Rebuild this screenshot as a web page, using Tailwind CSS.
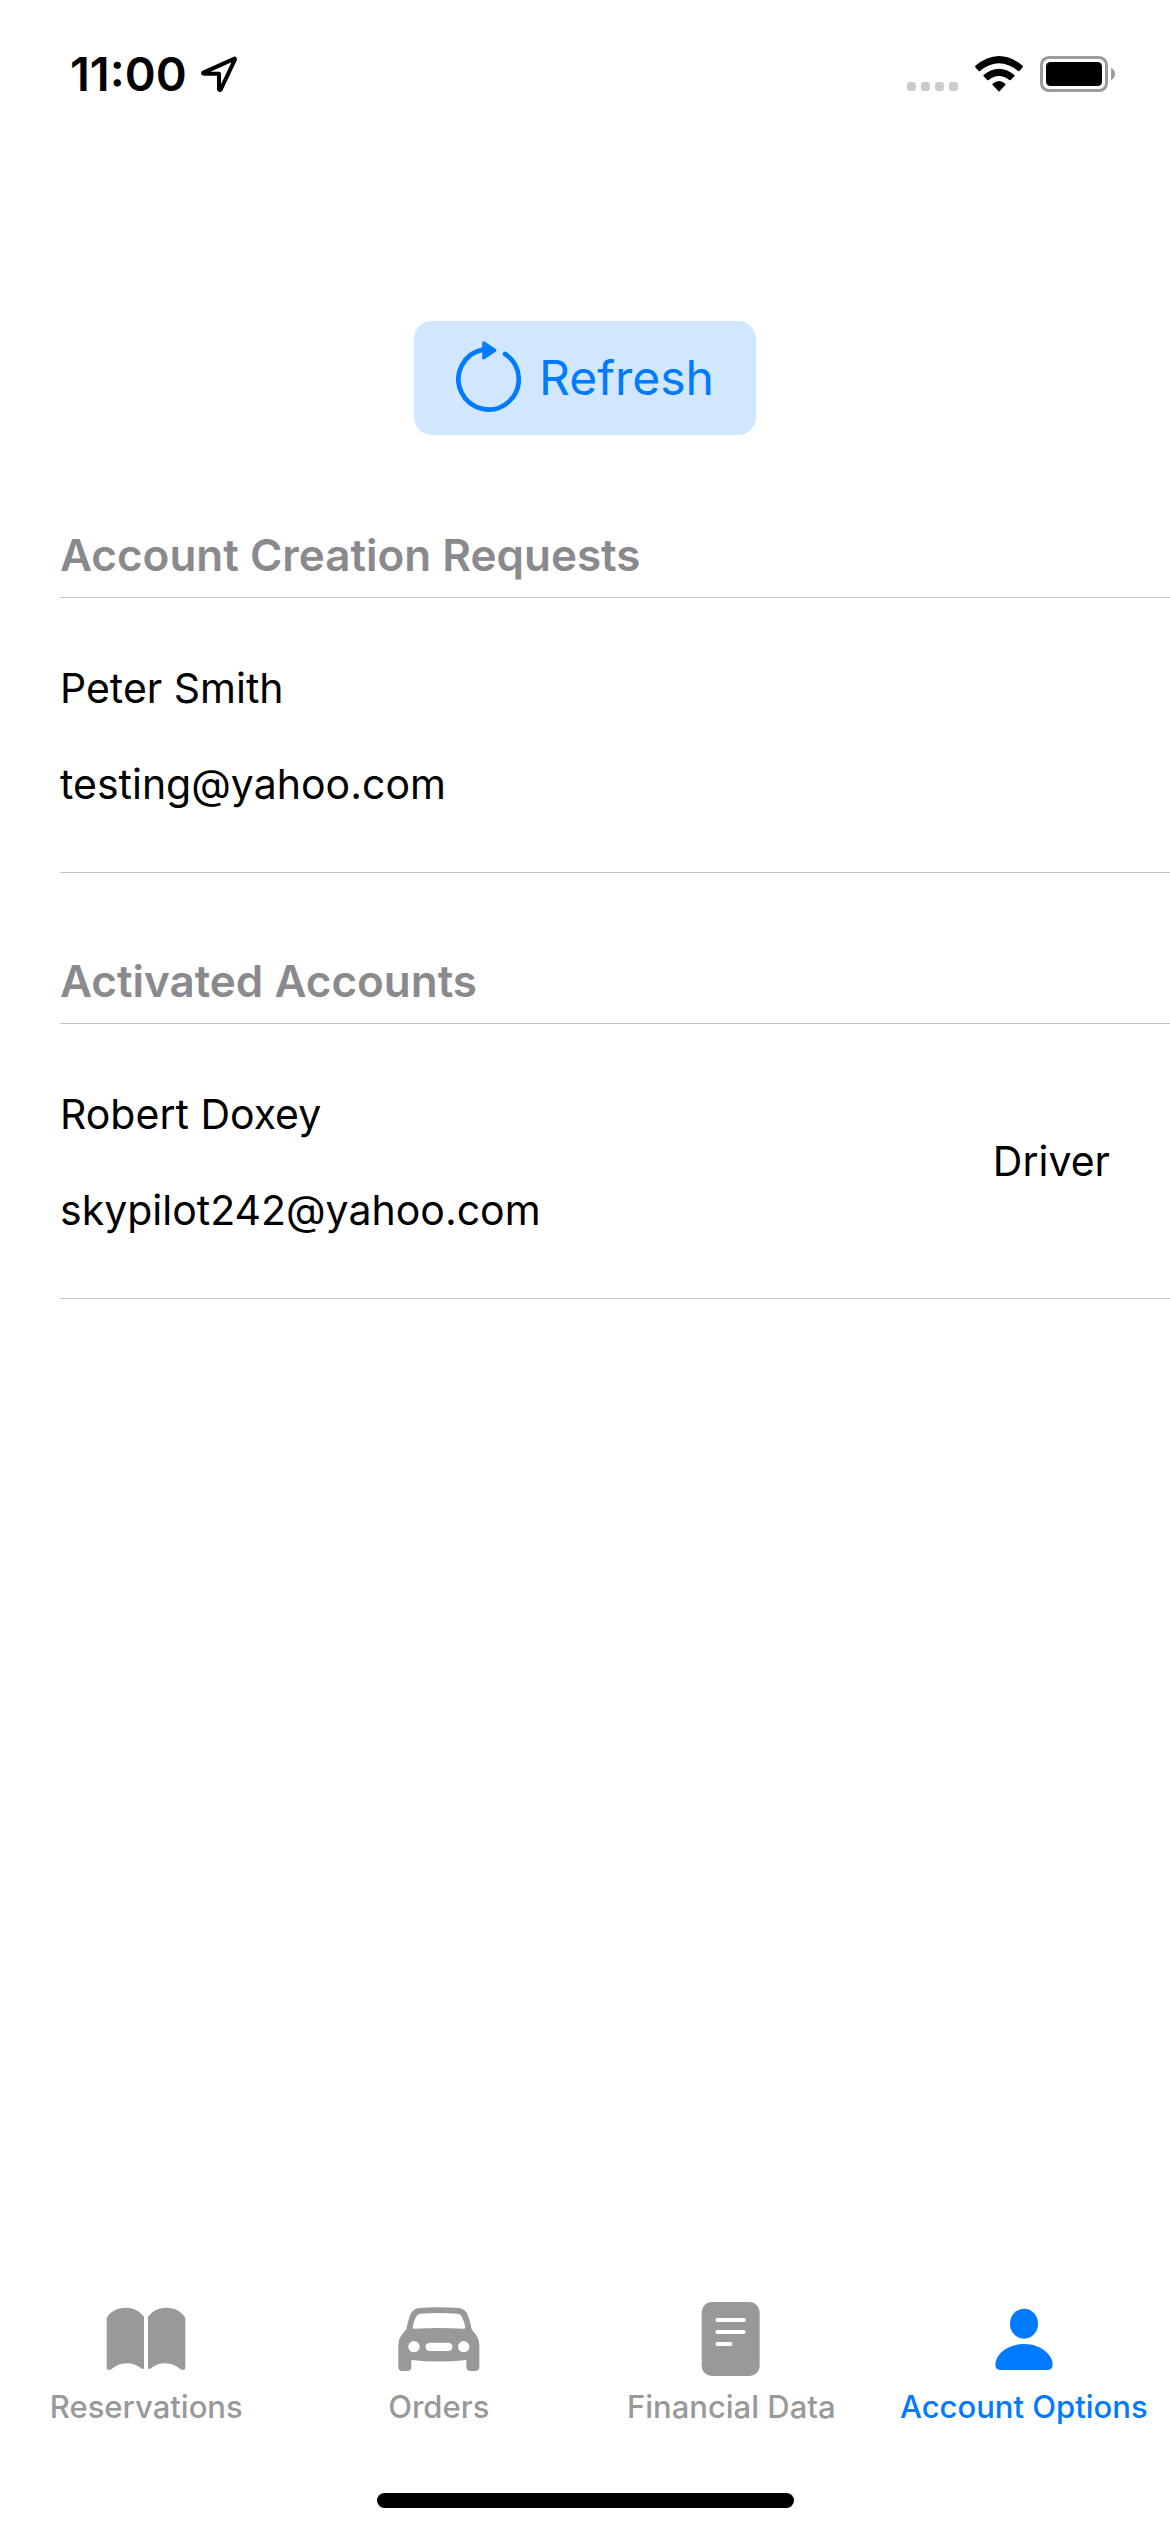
<!DOCTYPE html>
<html lang="en">
<head>
<meta charset="utf-8">
<meta name="viewport" content="width=device-width, initial-scale=1">
<title>Account Options</title>
<script src="https://cdn.jsdelivr.net/npm/@tailwindcss/browser@4"></script>
</head>
<body class="flex min-h-screen flex-col bg-white font-['Inter',sans-serif] text-black">

  <!-- Status bar -->
  <header class="flex items-center justify-between pt-[50px] pr-[55px] pl-[70px]">
    <div class="flex items-center gap-[14px]">
      <time class="text-[47px] leading-[48px] font-semibold">11:00</time>
      <svg class="h-9 w-9" viewBox="480 80 108 108" fill="none" stroke="#000" stroke-width="12" stroke-linejoin="round" aria-label="Location in use">
        <path d="M581 88 L487 130 Q485 133 489 133 H534 V179 Q535 183 539 181 L582 90 Z"/>
      </svg>
    </div>
    <div class="flex items-center">
      <svg class="mr-[17px] h-9 w-[51px]" viewBox="0 0 51 36" fill="#cbcbcb" aria-label="No signal">
        <rect x="0" y="26" width="9" height="9" rx="3"/>
        <rect x="14" y="26" width="9" height="9" rx="3"/>
        <rect x="28" y="26" width="9" height="9" rx="3"/>
        <rect x="42" y="26" width="9" height="9" rx="3"/>
      </svg>
      <svg class="mr-[17px] h-9 w-12" viewBox="285 76 144 108" aria-label="Wi-Fi">
        <path d="M285 106 Q357 46 429 106 Q430 108 428 110 L418 121 Q416 123 414 121 Q357 75 300 121 Q298 123 296 121 L286 110 Z"/>
        <path d="M311 133 Q357 95 403 133 Q405 135 403 137 L392 148 Q390 150 388 148 Q357 124 326 148 Q324 150 322 148 L311 137 Q309 135 311 133 Z"/>
        <path d="M338 159 Q357 143 376 159 Q378 161 376 163 L359 181 Q357 184 355 181 L338 163 Q336 161 338 159 Z"/>
      </svg>
      <svg class="h-9 w-[75px]" viewBox="480 78 225 108" aria-label="Battery full">
        <rect x="484.500" y="82.500" width="195" height="99" rx="22" fill="none" stroke="#9b9b9b" stroke-width="9"/>
        <rect x="498" y="96" width="168" height="72" rx="13"/>
        <path d="M693 114 Q705 119 705 132 Q705 145 693 150 Z" fill="#9b9b9b"/>
      </svg>
    </div>
  </header>

  <main class="flex grow flex-col pt-[223px]">
    <button type="button" class="flex h-[114px] items-center gap-[18px] self-center rounded-[18px] bg-[#d1e7ff] px-[42px] text-[48px] leading-[60px] text-[#007aff]">
      <svg class="h-[75px] w-[65px]" viewBox="171 120 195 225" fill="none" stroke="#007aff" aria-hidden="true">
        <path d="M318 159 A90.500 90.500 0 1 1 252 146" stroke-width="14" stroke-linecap="round"/>
        <path d="M254 125 L288 147.500 L254 171 Z" fill="#007aff" stroke-width="9" stroke-linejoin="round"/>
      </svg>
      Refresh
    </button>

    <div class="mt-3 pl-[60px]">
      <section>
        <h2 class="border-b border-[#c6c6c8] pt-[82px] pb-4 text-[44px] leading-[52px] font-semibold text-[#8a8a8e]">Account Creation Requests</h2>
        <ul>
          <li class="flex items-center justify-between border-b border-[#c6c6c8] pr-[60px]">
            <div class="flex flex-col gap-12 pt-[66px] pb-16 text-[41px] leading-[48px]">
              <p>Peter Smith</p>
              <p>testing@yahoo.com</p>
            </div>
          </li>
        </ul>
      </section>
      <section>
        <h2 class="border-b border-[#c6c6c8] pt-[82px] pb-4 text-[44px] leading-[52px] font-semibold text-[#8a8a8e]">Activated Accounts</h2>
        <ul>
          <li class="flex items-center justify-between border-b border-[#c6c6c8] pr-[60px]">
            <div class="flex flex-col gap-12 pt-[66px] pb-16 text-[41px] leading-[48px]">
              <p>Robert Doxey</p>
              <p>skypilot242@yahoo.com</p>
            </div>
            <p class="text-[41px] leading-[48px]">Driver</p>
          </li>
        </ul>
      </section>
    </div>
  </main>

  <!-- Tab bar -->
  <nav class="grid grid-cols-4 text-[31px] leading-9 font-medium whitespace-nowrap text-[#999999]" aria-label="Tabs">
    <a href="#reservations" class="flex flex-col items-center gap-[11px]">
      <svg class="h-[78px] w-[100px]" viewBox="199 60 300 234" fill="currentColor" aria-hidden="true">
        <path d="M231 114 C241 95 263 83 289 83 C313 83 333 95 343 111 V264 Q341 269 336 266 C322 255 308 250 291 250 C273 250 259 256 245 268 Q233 274 231 264 Z"/>
        <path d="M467 114 C457 95 435 83 409 83 C385 83 365 95 355 111 V264 Q357 269 362 266 C376 255 390 250 407 250 C425 250 439 256 453 268 Q465 274 467 264 Z"/>
      </svg>
      Reservations
    </a>
    <a href="#orders" class="flex flex-col items-center gap-[11px]">
      <svg class="h-[78px] w-[100px]" viewBox="116 60 300 234" fill="currentColor" aria-hidden="true">
        <path fill-rule="evenodd" d="M206 84 Q265 79 325 84 C339 86 348 93 352 104 C357 117 361 132 364 148 L378 166 Q387 179 387 196 V260 Q387 273 374 273 H361 Q348 273 348 260 V240 Q265 249 183 240 V260 Q183 273 170 273 H157 Q144 273 144 260 V196 Q144 179 153 166 L168 148 C171 132 175 117 180 104 C184 93 193 86 206 84 Z
          M210 101 Q201 102 197 110 Q190 124 187 141 Q187 147 193 146 Q265 142 339 146 Q345 147 345 141 Q341 124 335 110 Q331 102 322 101 Q265 97 210 101 Z
          M174 200 a17 17 0 1 0 34 0 a17 17 0 1 0 -34 0 Z
          M323 200 a17 17 0 1 0 34 0 a17 17 0 1 0 -34 0 Z
          M238 188 H294 a12.500 12.500 0 0 1 0 25 H238 a12.500 12.500 0 0 1 0 -25 Z"/>
      </svg>
      Orders
    </a>
    <a href="#financial" class="flex flex-col items-center gap-[11px]">
      <svg class="h-[78px] w-[100px]" viewBox="214 60 300 234" aria-hidden="true">
        <rect x="276" y="66" width="174" height="222" rx="30" fill="currentColor"/>
        <path d="M323 120 H402 M323 156 H402 M323 192 H362" stroke="#fff" stroke-width="12" stroke-linecap="round"/>
      </svg>
      Financial Data
    </a>
    <a href="#account" aria-current="page" class="flex flex-col items-center gap-[11px] text-[#007aff]">
      <svg class="h-[78px] w-[100px]" viewBox="281 60 300 234" fill="currentColor" aria-hidden="true">
        <ellipse cx="431" cy="131" rx="42" ry="45"/>
        <path d="M345 254 C345 226 378 192 431 192 C484 192 517 226 517 254 Q517 270 499 270 H363 Q345 270 345 254 Z"/>
      </svg>
      Account Options
    </a>
  </nav>

  <!-- Home indicator -->
  <div class="mt-[68px] mb-6 h-[15px] w-[417px] self-center rounded-full bg-black"></div>
</body>
</html>
